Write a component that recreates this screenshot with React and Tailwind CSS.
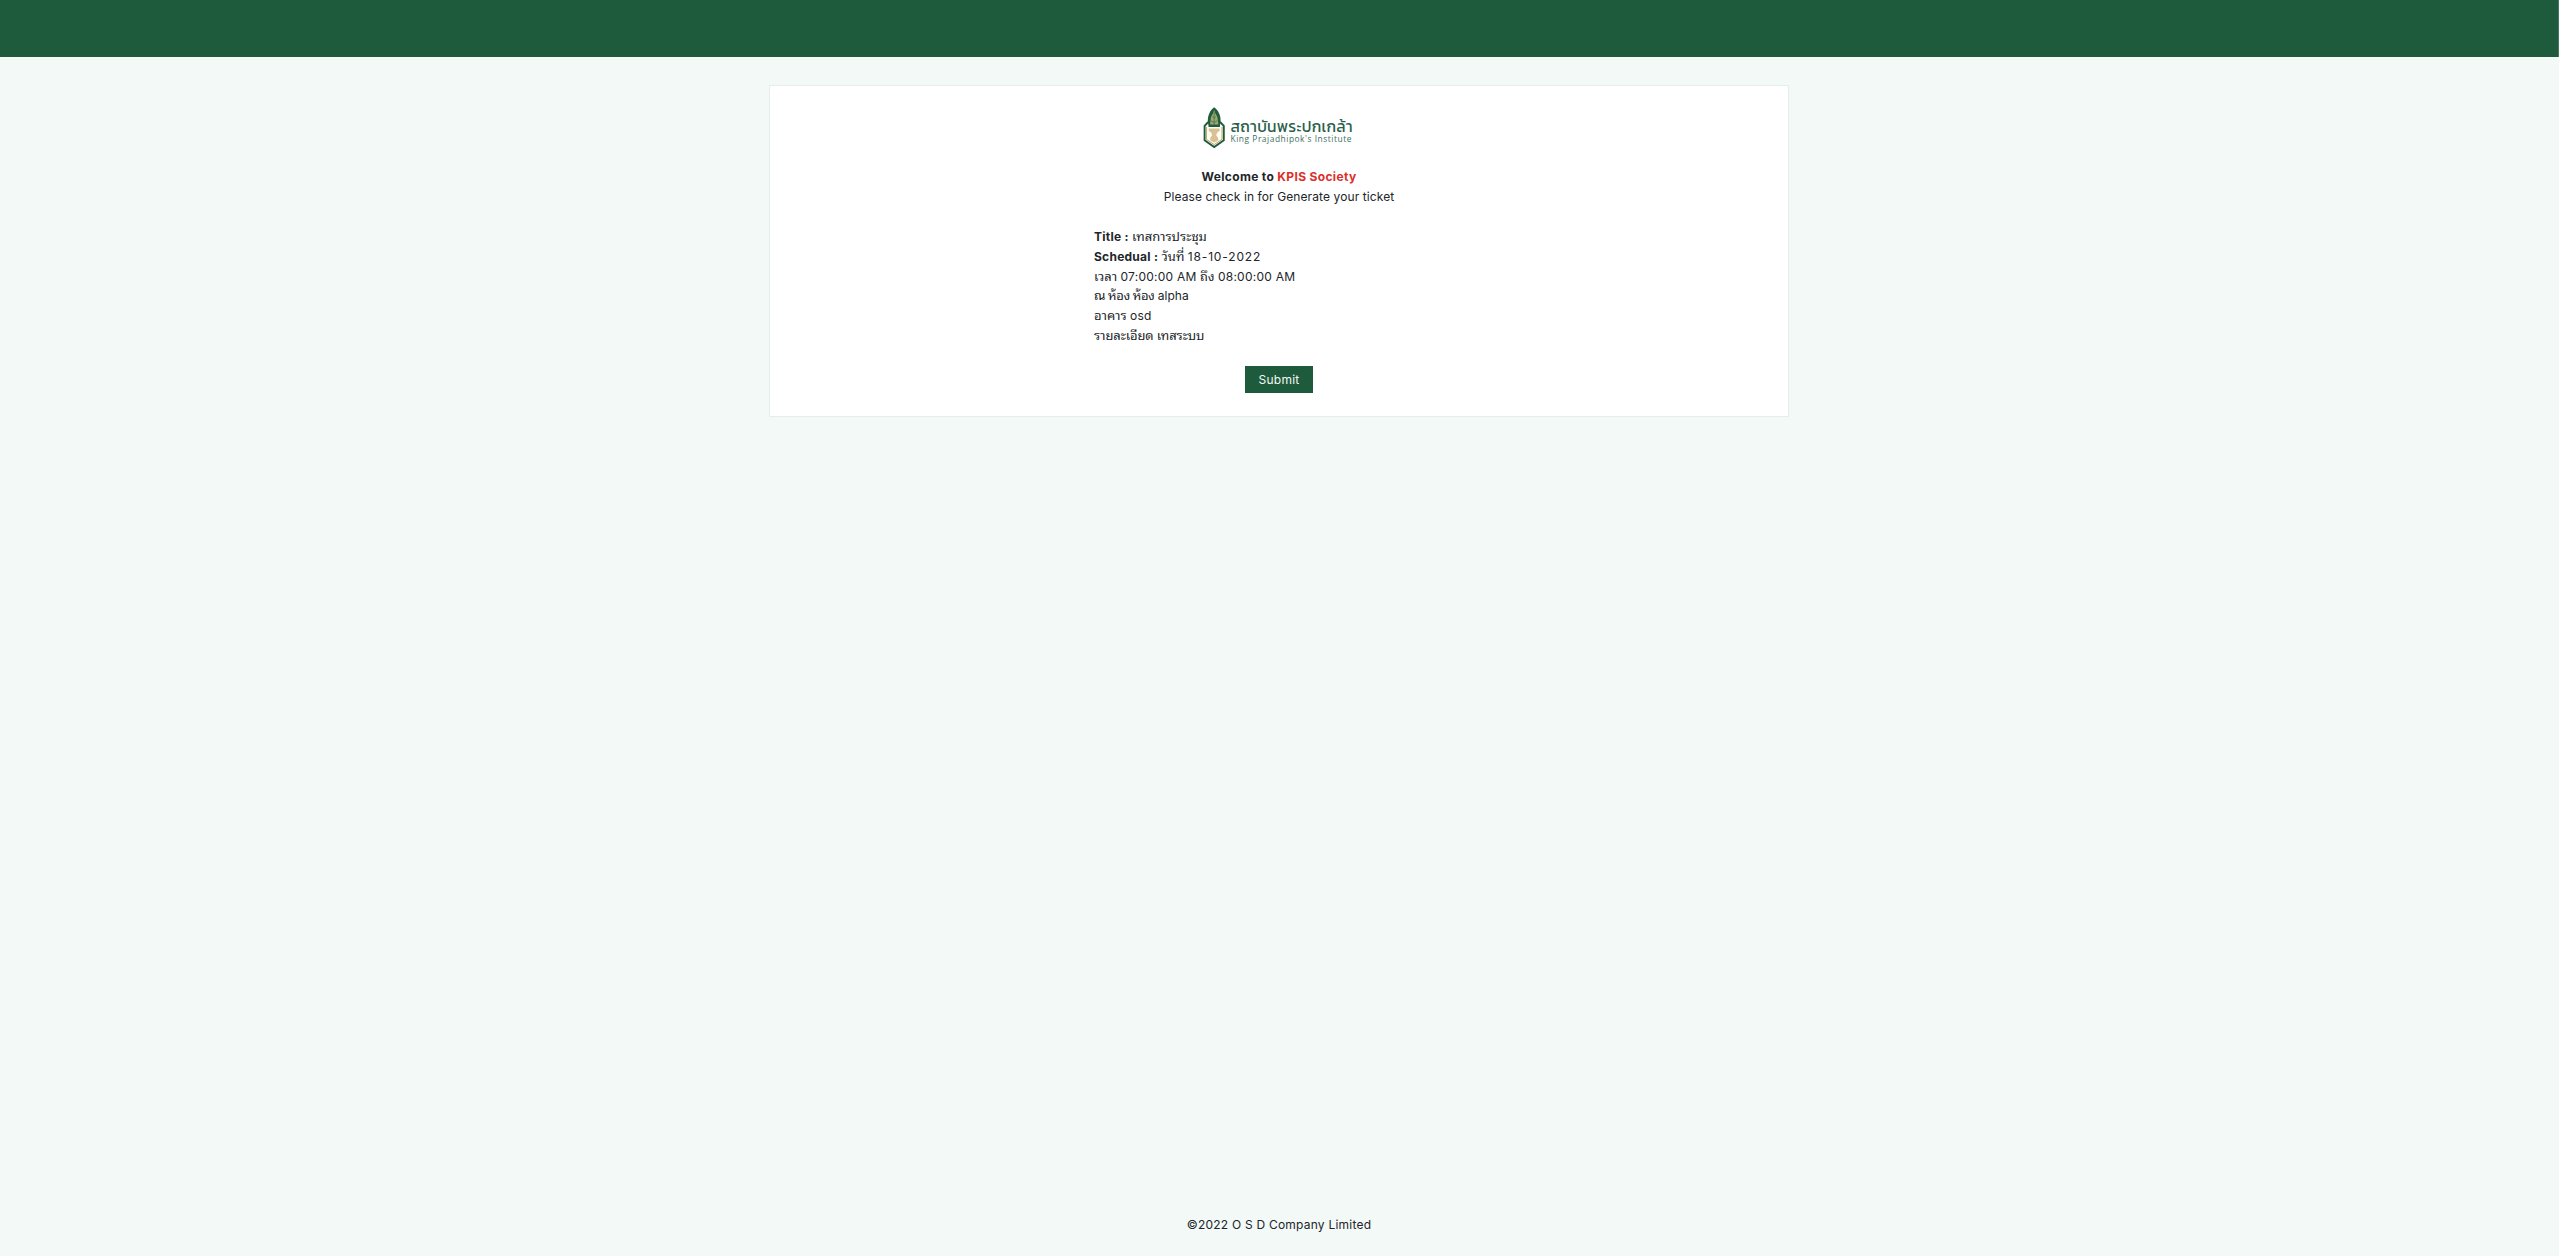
import React from "react";

function Logo() {
  return (
    <div className="mt-px flex h-[42px] w-[152px] items-start">
      <svg width="23" height="42" viewBox="0 0 23 42" className="shrink-0" aria-hidden="true">
        <path d="M4.800 15.500L1.600 18.800V33.300L11.200 40L20.800 33.300V18.800L17.600 15.500Z" fill="#fffdf4" stroke="#1e5b3c" strokeWidth="1.900" />
        <path d="M3.400 20V32.300L11.200 37.600L19 32.300V20" fill="none" stroke="#b5a468" strokeWidth="1" />
        <path d="M11.200 0.200C7.200 3.200 4.800 8 4.800 13.500L5.600 20H16.800L17.600 13.500C17.600 8 15.200 3.200 11.200 0.200Z" fill="#235c3c" />
        <path d="M11.200 3L12.400 6.500L14.400 10L15.400 17.500H7L8 10L10 6.500Z" fill="#9aa873" />
        <path d="M11.200 5V18M9.400 9.500L11.200 11.200L13 9.500M8 13.800L11.200 15.500L14.400 13.800" stroke="#3b6d45" strokeWidth="0.700" fill="none" />
        <path d="M5.800 21.500H16.600V24L14.200 25.600L13.200 28.200L15.200 31V33.500L11.200 35.500L7.200 33.500V31L9.200 28.200L8.200 25.600L5.800 24Z" fill="#d9c193" />
      </svg>
      <div className="flex flex-col pt-[8.500px] pl-[4.500px] whitespace-nowrap">
        <span className="h-[17px] font-['Kanit','Noto_Sans_Thai',sans-serif] text-[15.5px] leading-[22px] font-normal tracking-[0.3px] text-[#2b5f4c]">สถาบันพระปกเกล้า</span>
        <span className="font-['Open_Sans',sans-serif] text-[8.4px] leading-[12px] tracking-[0.54px] text-[#41705f]">King Prajadhipok's Institute</span>
      </div>
    </div>
  );
}

function Thai({ children }) {
  return <span className="font-['Noto_Sans_Thai_Looped','Loma','Garuda','Waree','Norasi','Noto_Serif_Thai','Inter',sans-serif] text-[13px] leading-none">{children}</span>;
}

export default function App() {
  return (
    <div className="flex h-[1258px] flex-col bg-white font-['Inter','Noto_Sans_Thai',sans-serif] text-[12px] leading-[19.8px] text-[#212529]">
      <header className="h-[57px] shrink-0 border-r border-[#49795f] bg-[#1e5b3c]" />
      <div className="flex h-[1199px] flex-col items-center bg-[#f3f9f7] pt-7 pr-px">
        <main className="flex h-[332px] w-[1020px] flex-col items-center border border-[#e7edeb] bg-white pt-5">
          <Logo />
          <div className="mt-[18px] text-center">
            <p className="font-bold tracking-[0.34px]">Welcome to <span className="text-[#dc2f2b]">KPIS Society</span></p>
            <p className="tracking-[0.1px]">Please check in for Generate your ticket</p>
          </div>
          <div className="mt-[20.4px] w-[370px]">
            <p className="h-[19.8px]"><b className="tracking-[0.25px]">Title :</b> <Thai>เทสการประชุม</Thai></p>
            <p className="h-[19.8px]"><b className="tracking-[0.25px]">Schedual :</b> <Thai>วันที่</Thai> <span className="tracking-[0.85px]">18-10-2022</span></p>
            <p className="h-[19.8px]"><Thai>เวลา</Thai> <span className="tracking-[0.24px]">07:00:00 AM</span> <Thai>ถึง</Thai> <span className="tracking-[0.24px]">08:00:00 AM</span></p>
            <p className="h-[19.8px]"><span className="tracking-[-0.4px]"><Thai>ณ ห้อง ห้อง</Thai></span> alpha</p>
            <p className="h-[19.8px]"><Thai>อาคาร</Thai> <span className="tracking-[0.2px]">osd</span></p>
            <p className="h-[19.8px] tracking-[-0.1px]"><Thai>รายละเอียด เทสระบบ</Thai></p>
          </div>
          <button className="mt-[20.4px] h-[27px] w-[68px] bg-[#1e5b3c] leading-[26px] tracking-[0.25px] text-[#f3f9f7]">Submit</button>
        </main>
        <footer className="mt-auto mb-[21px] tracking-[0.22px]">©2022 O S D Company Limited</footer>
      </div>
    </div>
  );
}
